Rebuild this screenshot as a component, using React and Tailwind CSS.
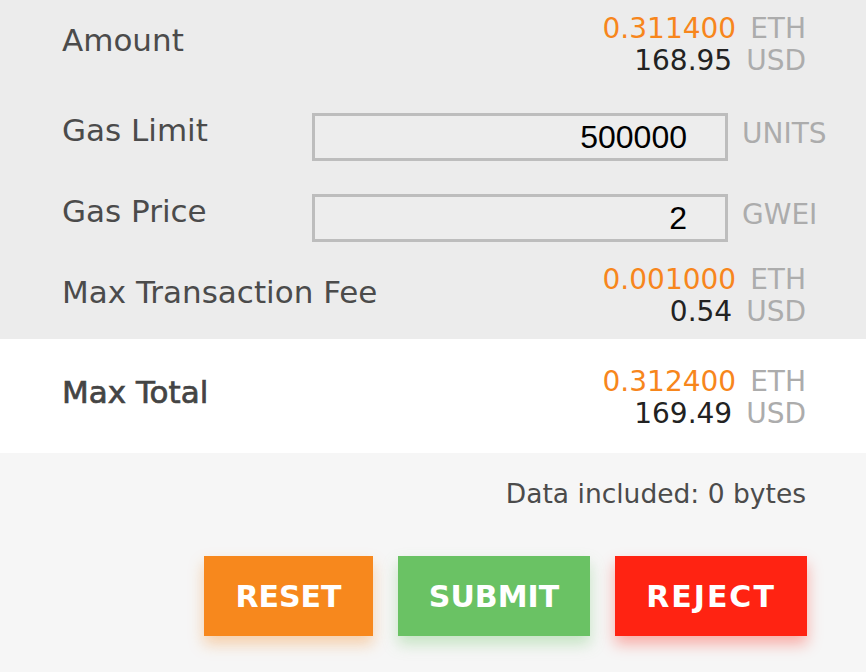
import React from "react";

const font = { fontFamily: '"DejaVu Sans", sans-serif' };

function Amount({ eth, usd }) {
    return (
        <div className="flex flex-col items-end text-[28px] leading-[32px]">
            <div>
                <span className="text-[#f7861c]">{eth}</span>
                <span className="ml-[14px] text-[#acacac]">ETH</span>
            </div>
            <div>
                <span className="text-[#222]">{usd}</span>
                <span className="ml-[14px] text-[#acacac]">USD</span>
            </div>
        </div>
    );
}

function InputRow({ label, value, unit, className }) {
    return (
        <div className={"flex items-start " + className}>
            <div className="w-[250px] shrink-0 text-[31px] leading-[34px] text-[#4b4b4b]">{label}</div>
            <input
                readOnly
                value={value}
                className="h-[48px] w-[416px] shrink-0 border-[3px] border-[#bdbdbd] bg-[#ededed] pr-[38px] text-right text-[32px] text-black outline-none"
                style={{ fontFamily: '"Liberation Sans", Arial, sans-serif' }}
            />
            <div className="ml-[14px] shrink-0 text-[28px] leading-[42px] text-[#acacac]">{unit}</div>
        </div>
    );
}

export default function App() {
    return (
        <div className="h-[672px] w-[866px] overflow-hidden bg-[#f6f6f6]" style={font}>
            {/* fee details */}
            <section className="bg-[#ececec] pb-[11px] pl-[62px] pr-[60px] pt-[13px]">
                <div className="flex items-start justify-between">
                    <div className="mt-[7px] text-[31px] leading-[40px] text-[#4b4b4b]">Amount</div>
                    <Amount eth="0.311400" usd="168.95" />
                </div>
                <InputRow className="mt-[36px]" label="Gas Limit" value="500000" unit="UNITS" />
                <InputRow className="mt-[33px]" label="Gas Price" value="2" unit="GWEI" />
                <div className="mt-[22px] flex items-start justify-between">
                    <div className="mt-[8px] text-[31px] leading-[40px] text-[#4b4b4b]">Max Transaction Fee</div>
                    <Amount eth="0.001000" usd="0.54" />
                </div>
            </section>

            {/* total */}
            <section className="flex items-start justify-between bg-white pb-[23px] pl-[62px] pr-[60px] pt-[27px]">
                <div className="mt-[6px] text-[31px] leading-[40px] text-[#444] [-webkit-text-stroke:0.7px_#444]">
                    Max Total
                </div>
                <Amount eth="0.312400" usd="169.49" />
            </section>

            {/* footer */}
            <section className="pr-[60px] pt-[24px]">
                <div className="text-right text-[26.5px] leading-[34px] text-[#4b4b4b]">Data included: 0 bytes</div>
                <div className="-mr-[1px] mt-[45px] flex justify-end gap-[25px]">
                    <button className="h-[80px] w-[169px] bg-[#f7881d] text-[30px] font-bold text-white shadow-[0_8px_14px_rgba(247,136,29,0.35)]">
                        RESET
                    </button>
                    <button className="h-[80px] w-[192px] bg-[#6ac264] text-[30px] font-bold text-white shadow-[0_8px_14px_rgba(106,194,100,0.35)]">
                        SUBMIT
                    </button>
                    <button className="h-[80px] w-[192px] bg-[#ff2312] text-[30px] font-bold tracking-[2px] text-white shadow-[0_8px_14px_rgba(255,35,18,0.35)]">
                        REJECT
                    </button>
                </div>
            </section>
        </div>
    );
}
